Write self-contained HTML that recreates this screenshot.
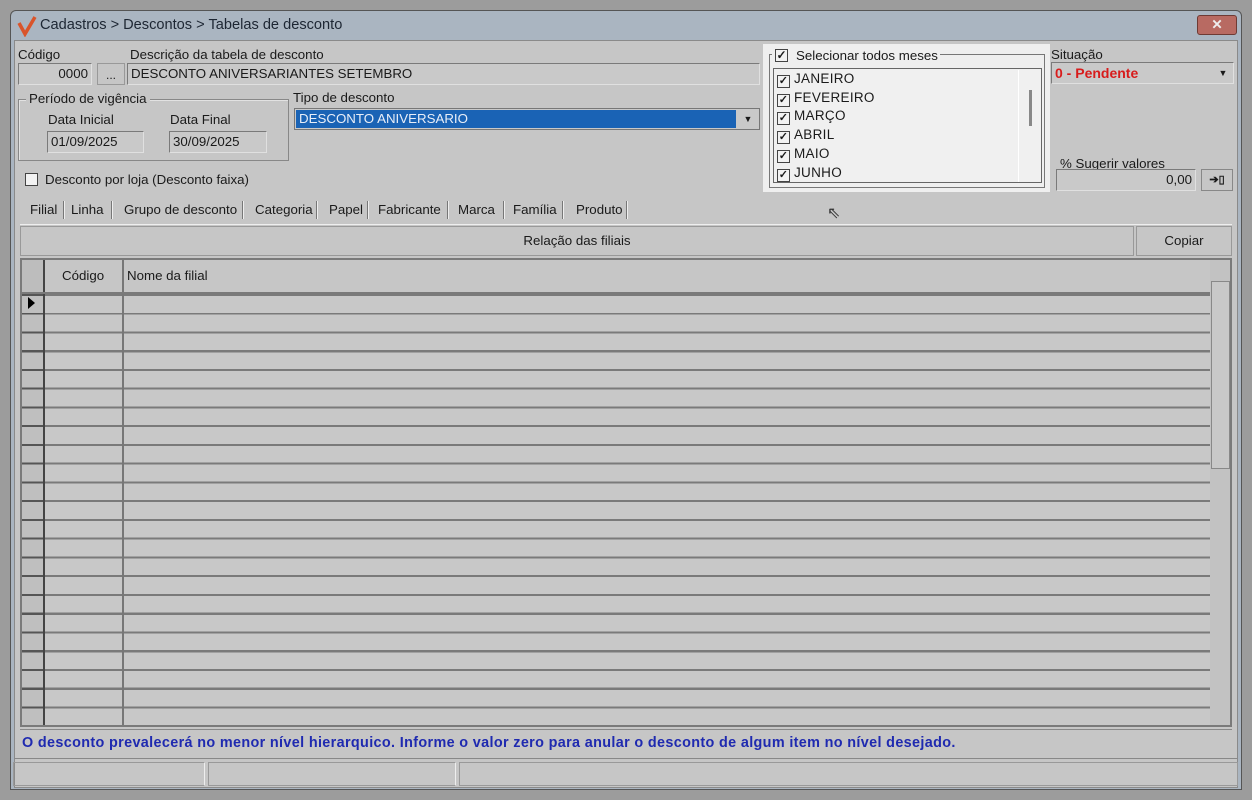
<!DOCTYPE html>
<html><head><meta charset="utf-8"><style>
*{box-sizing:border-box;margin:0;padding:0}
body{width:1252px;height:800px;background:#9c9c9c;font-family:"Liberation Sans",sans-serif;font-size:13.3px;color:#1a1a1a;position:relative;overflow:hidden}
.a{position:absolute}
.win{left:10px;top:10px;width:1232px;height:780px;background:#aab5c1;border:1px solid #555;border-radius:6px 6px 0 0}
.client{left:14px;top:40px;width:1224px;height:748px;background:#c6c6c6;border:1px solid #8a8a8a}
.inp{background:#c9c9c9;border:1px solid #7a7a7a;border-right-color:#e0e0e0;border-bottom-color:#e0e0e0;height:22px;line-height:20px;padding:0 3px;font-size:13.3px}
.grp{border:1px solid #888;box-shadow:inset 1px 1px 0 #e2e2e2}
.lbl{font-size:13.3px;white-space:nowrap}
.tab{top:200px;height:20px;line-height:20px;font-size:13.3px}
.sep{top:201px;width:2px;height:18px;border-left:1px solid #777;border-right:1px solid #eee}
.cb{width:13px;height:13px;border:1px solid #444;background:#f2f2f2;font-size:11px;line-height:11px;text-align:center;font-weight:bold}
</style></head><body>
<div class="a win"></div>
<svg class="a" style="left:16px;top:15px" width="22" height="22"><path d="M3 8 L9 19 L19 2" stroke="#d9542b" stroke-width="3.5" fill="none"/></svg>
<div class="a" style="left:40px;top:17px;font-size:14.6px;color:#1d2633">Cadastros &gt; Descontos &gt; Tabelas de desconto</div>
<div class="a" style="left:1197px;top:15px;width:40px;height:20px;background:#b86a62;border:1px solid #6e3a34;border-radius:3px;color:#eee;text-align:center;font-weight:bold;line-height:18px">✕</div>
<div class="a client"></div>

<div class="a lbl" style="left:18px;top:47px">Código</div>
<div class="a inp" style="left:18px;top:63px;width:74px;text-align:right">0000</div>
<div class="a" style="left:97px;top:63px;width:28px;height:22px;border:1px solid #999;text-align:center;line-height:22px;font-size:12px">...</div>
<div class="a lbl" style="left:130px;top:47px">Descrição da tabela de desconto</div>
<div class="a inp" style="left:127px;top:63px;width:633px">DESCONTO ANIVERSARIANTES SETEMBRO</div>

<div class="a grp" style="left:18px;top:99px;width:271px;height:62px"></div>
<div class="a lbl" style="left:26px;top:91px;background:#c6c6c6;padding:0 3px">Período de vigência</div>
<div class="a lbl" style="left:48px;top:112px">Data Inicial</div>
<div class="a inp" style="left:47px;top:131px;width:97px">01/09/2025</div>
<div class="a lbl" style="left:170px;top:112px">Data Final</div>
<div class="a inp" style="left:169px;top:131px;width:98px">30/09/2025</div>

<div class="a lbl" style="left:293px;top:90px">Tipo de desconto</div>
<div class="a" style="left:294px;top:108px;width:466px;height:22px;border:1px solid #777;background:#c9c9c9"></div>
<div class="a" style="left:296px;top:110px;width:440px;height:18px;background:#1a63b5;color:#e8eef8;line-height:18px;padding-left:3px">DESCONTO ANIVERSARIO</div>
<div class="a" style="left:738px;top:110px;width:20px;height:18px;background:#c9c9c9;text-align:center;font-size:9px;line-height:18px">▼</div>

<div class="a cb" style="left:25px;top:173px"></div>
<div class="a lbl" style="left:45px;top:172px">Desconto por loja (Desconto faixa)</div>

<div class="a" style="left:763px;top:44px;width:287px;height:148px;background:#efefef"></div>
<div class="a" style="left:769px;top:54px;width:276px;height:134px;border:1px solid #777"></div>
<div class="a" style="left:772px;top:48px;width:168px;height:16px;background:#efefef"></div>
<div class="a cb" style="left:775px;top:49px;font-size:12px">✓</div>
<div class="a lbl" style="left:796px;top:48px">Selecionar todos meses</div>
<div class="a" style="left:773px;top:68px;width:269px;height:115px;border:1px solid #666;background:#f0f0f0"></div>
<div class="a" style="left:1018px;top:70px;width:1px;height:112px;background:#fff"></div>
<div class="a" style="left:1029px;top:90px;width:3px;height:36px;background:#888"></div>
<div class="a" style="left:777px;top:70px;line-height:18.7px;font-size:13.5px;letter-spacing:0.3px">
<div><span class="cb" style="display:inline-block;vertical-align:-1px;margin-right:4px">✓</span>JANEIRO</div>
<div><span class="cb" style="display:inline-block;vertical-align:-1px;margin-right:4px">✓</span>FEVEREIRO</div>
<div><span class="cb" style="display:inline-block;vertical-align:-1px;margin-right:4px">✓</span>MARÇO</div>
<div><span class="cb" style="display:inline-block;vertical-align:-1px;margin-right:4px">✓</span>ABRIL</div>
<div><span class="cb" style="display:inline-block;vertical-align:-1px;margin-right:4px">✓</span>MAIO</div>
<div><span class="cb" style="display:inline-block;vertical-align:-1px;margin-right:4px">✓</span>JUNHO</div>
</div>

<div class="a lbl" style="left:1051px;top:47px">Situação</div>
<div class="a inp" style="left:1051px;top:62px;width:183px;color:#d81c1c;font-weight:bold;font-size:14px">0 - Pendente</div>
<div class="a" style="left:1214px;top:64px;width:18px;height:18px;text-align:center;font-size:9px;line-height:18px">▼</div>
<div class="a lbl" style="left:1060px;top:156px">% Sugerir valores</div>
<div class="a inp" style="left:1056px;top:169px;width:140px;text-align:right">0,00</div>
<div class="a" style="left:1201px;top:169px;width:32px;height:22px;border:1px solid #888;text-align:center;line-height:20px;font-size:11px;font-weight:bold">➔▯</div>

<div class="a" style="left:827px;top:203px;font-size:16px;color:#333">⇖</div>

<div class="a tab" style="left:30px">Filial</div><div class="a sep" style="left:63px"></div>
<div class="a tab" style="left:71px">Linha</div><div class="a sep" style="left:111px"></div>
<div class="a tab" style="left:124px">Grupo de desconto</div><div class="a sep" style="left:242px"></div>
<div class="a tab" style="left:255px">Categoria</div><div class="a sep" style="left:316px"></div>
<div class="a tab" style="left:329px">Papel</div><div class="a sep" style="left:367px"></div>
<div class="a tab" style="left:378px">Fabricante</div><div class="a sep" style="left:447px"></div>
<div class="a tab" style="left:458px">Marca</div><div class="a sep" style="left:503px"></div>
<div class="a tab" style="left:513px">Família</div><div class="a sep" style="left:562px"></div>
<div class="a tab" style="left:576px">Produto</div><div class="a sep" style="left:626px"></div>

<div class="a" style="left:20px;top:224px;width:1212px;height:1px;background:#eee"></div>
<div class="a" style="left:20px;top:226px;width:1114px;height:30px;border:1px solid #999;text-align:center;line-height:28px">Relação das filiais</div>
<div class="a" style="left:1136px;top:226px;width:96px;height:30px;border:1px solid #999;text-align:center;line-height:28px">Copiar</div>

<div class="a" style="left:20px;top:258px;width:1212px;height:469px;border:2px solid #7a7a7a;background:#c6c6c6"></div>
<div class="a" style="left:22px;top:294px;width:1188px;height:431px;background:repeating-linear-gradient(to bottom,#7a7a7a 0 2px,#c8c8c8 2px 18.75px)"></div>
<div class="a" style="left:22px;top:260px;width:22px;height:465px;background:#bdbdbd"></div>
<div class="a" style="left:22px;top:294px;width:22px;height:431px;background:repeating-linear-gradient(to bottom,#555 0 2px,#bfbfbf 2px 18.75px)"></div>
<div class="a" style="left:43px;top:260px;width:2px;height:465px;background:#444"></div>
<div class="a" style="left:122px;top:260px;width:2px;height:465px;background:#777"></div>
<div class="a" style="left:22px;top:292px;width:1188px;height:2px;background:#7a7a7a"></div>
<div class="a" style="left:28px;top:297px;width:0;height:0;border-left:7px solid #000;border-top:6px solid transparent;border-bottom:6px solid transparent"></div>
<div class="a lbl" style="left:62px;top:268px">Código</div>
<div class="a lbl" style="left:127px;top:268px">Nome da filial</div>
<div class="a" style="left:1210px;top:260px;width:20px;height:465px;background:#c2c2c2"></div>
<div class="a" style="left:1211px;top:281px;width:19px;height:188px;border:1px solid #888;background:#c8c8c8"></div>

<div class="a" style="left:20px;top:729px;width:1212px;height:1px;background:#888"></div>
<div class="a" style="left:22px;top:735px;color:#1f2ab0;font-weight:bold;font-size:14.4px;letter-spacing:0.35px;white-space:nowrap">O desconto prevalecerá no menor nível hierarquico. Informe o valor zero para anular o desconto de algum item no nível desejado.</div>
<div class="a" style="left:14px;top:758px;width:1224px;height:1px;background:#888"></div>
<div class="a" style="left:13px;top:762px;width:192px;height:24px;border:1px solid #999;border-right-color:#eee"></div>
<div class="a" style="left:208px;top:762px;width:248px;height:24px;border:1px solid #999;border-right-color:#eee"></div>
<div class="a" style="left:459px;top:762px;width:779px;height:24px;border:1px solid #999"></div>
</body></html>
